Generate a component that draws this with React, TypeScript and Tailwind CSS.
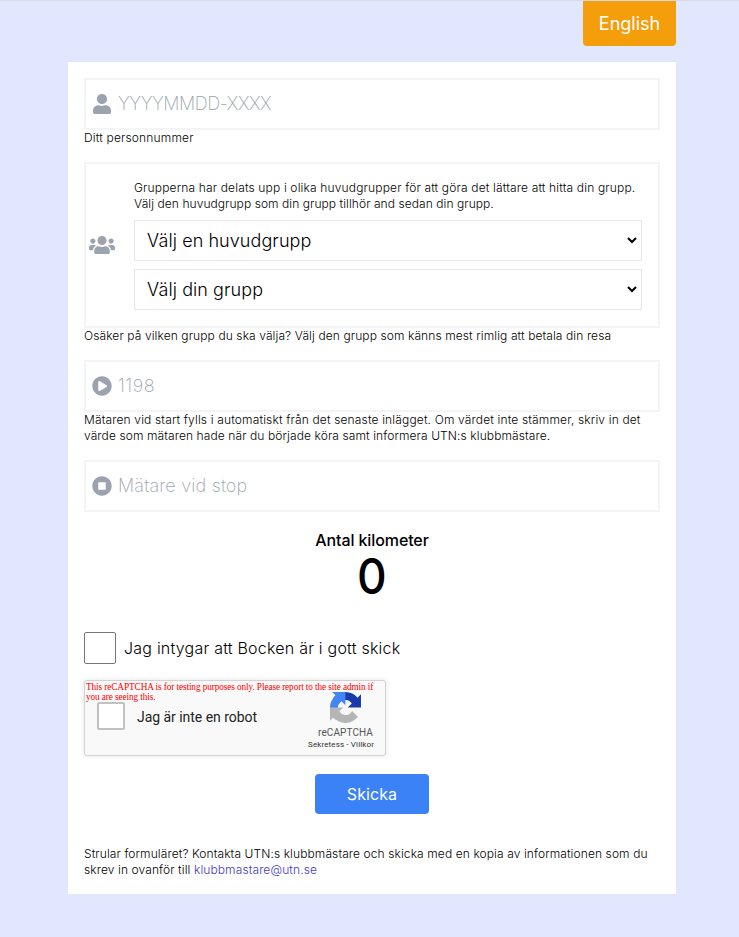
import React from 'react';
import { FaUser, FaUsers, FaPlayCircle, FaStopCircle } from 'react-icons/fa';

type FieldProps = { icon: React.ReactNode; placeholder: string; tracking: string };

function Field({ icon, placeholder, tracking }: FieldProps) {
  return (
    <div className="flex h-[52px] items-center border-2 border-[#f3f4f6] pl-1.5 text-[#9ca3af]">
      <span className="flex w-[26px] justify-start pb-px text-[20px]">{icon}</span>
      <input
        className={`min-w-0 flex-1 text-lg font-extralight text-black outline-none placeholder:text-[#9ca3af] ${tracking}`}
        placeholder={placeholder}
      />
    </div>
  );
}

function Select({ label }: { label: string }) {
  return (
    <div className="flex h-[41px] items-center justify-between border border-[#e5e7eb] pl-3 pr-1 text-lg font-light tracking-[0.07px]">
      <span>{label}</span>
      <svg width="10" height="7" viewBox="0 0 10 7" fill="none" stroke="black" strokeWidth="2">
        <path d="M1 1l4 4 4-4" />
      </svg>
    </div>
  );
}

function RecaptchaLogo() {
  return (
    <svg width="31" height="31" viewBox="0 0 64 64">
      <path fill="#1C3AA9" d="M64 31.955l-.033-1.37V4.687l-7.16 7.16C50.948 4.674 42.033.093 32.05.093c-10.4 0-19.622 4.96-25.458 12.64l11.736 11.86a15.55 15.55 0 0 1 4.754-5.334c2.05-1.6 4.952-2.906 8.968-2.906.485 0 .86.057 1.135.163 4.976.393 9.288 3.14 11.828 7.124l-8.307 8.307L64 31.953" />
      <path fill="#4285F4" d="M31.862.094l-1.37.033H4.594l7.16 7.16C4.58 13.147 0 22.06 0 32.046c0 10.4 4.96 19.622 12.64 25.458L24.5 45.768a15.55 15.55 0 0 1-5.334-4.754c-1.6-2.05-2.906-4.952-2.906-8.968 0-.485.057-.86.163-1.135.393-4.976 3.14-9.288 7.124-11.828l8.307 8.307L31.86.095" />
      <path fill="#B5B5B5" d="M.001 32.045l.033 1.37v25.898l7.16-7.16c5.86 7.173 14.774 11.754 24.76 11.754 10.4 0 19.622-4.96 25.458-12.64l-11.736-11.86a15.55 15.55 0 0 1-4.754 5.334c-2.05 1.6-4.952 2.906-8.968 2.906-.485 0-.86-.057-1.135-.163-4.976-.393-9.288-3.14-11.828-7.124l8.307-8.307c-10.522.04-22.4.066-27.295-.005" />
    </svg>
  );
}

function Captcha() {
  return (
    <div className="relative mt-4 h-[76px] w-[302px] rounded-[3px] border border-[#d3d3d3] bg-[#f9f9f9] font-['Roboto',sans-serif] shadow-[0_0_4px_1px_rgba(0,0,0,0.08)]">
      <p className="absolute left-px top-px whitespace-nowrap font-['Liberation_Serif',serif] text-[9.3px] font-normal leading-[10px] tracking-[-0.115px] text-[#ff0000]">
        This reCAPTCHA is for testing purposes only. Please report to the site admin if<br />you are seeing this.
      </p>
      <div className="flex h-full items-start pl-3">
        <span className="mt-[21px] h-7 w-7 rounded-[2px] border-2 border-[#c1c1c1] bg-white" />
        <span className="ml-3 mt-[26px] flex-1 text-sm font-normal leading-5 tracking-[-0.04px] text-[#222]">Jag är inte en robot</span>
        <div className="mr-[11px] mt-[11px] flex flex-col items-end text-[#555]">
          <span className="mr-[13px]"><RecaptchaLogo /></span>
          <span className="mr-px mt-[3px] text-[10px] font-normal leading-[13px] tracking-[0.1px]">reCAPTCHA</span>
          <span className="whitespace-nowrap text-[8px] font-normal leading-3 tracking-[0.13px] text-[#333]">Sekretess - Villkor</span>
        </div>
      </div>
    </div>
  );
}

export default function App() {
  return (
    <div className="h-[937px] border-t border-[#d9dbe0] bg-[#e0e7ff] font-['Inter',sans-serif] font-light text-black">
      <div className="ml-[68px] w-[608px]">
        <div className="flex justify-end">
          <button className="h-[45px] w-[93px] rounded-b bg-[#f59e0b] text-lg font-normal text-white">English</button>
        </div>
        <main className="mt-4 h-[832px] bg-white p-4 text-xs tracking-[0.1px]">
          <Field
            icon={
              <svg className="ml-px h-5 w-[18px]" viewBox="0 0 448 512" preserveAspectRatio="none" fill="currentColor">
                <path d="M224 256c70.700 0 128-57.300 128-128S294.700 0 224 0 96 57.300 96 128s57.300 128 128 128zm89.600 32h-16.700c-22.200 10.200-46.900 16-72.900 16s-50.600-5.800-72.900-16h-16.700C60.200 288 0 348.200 0 422.400V464c0 26.500 21.500 48 48 48h352c26.500 0 48-21.500 48-48v-41.600c0-74.200-60.200-134.400-134.400-134.400z" />
              </svg>
            }
            placeholder="YYYYMMDD-XXXX"
            tracking="tracking-[-0.42px]"
          />
          <p className="tracking-[0.16px]">Ditt personnummer</p>
          <div className="mt-4 flex h-[166px] items-center border-2 border-[#f3f4f6] pr-4">
            <FaUsers className="mb-px ml-[3px] mr-[19px] h-7 w-[26px] shrink-0 text-[#9ca3af]" />
            <div className="flex-1">
              <p className="mb-2 whitespace-nowrap">
                <span className="tracking-[0.155px]">Grupperna har delats upp i olika huvudgrupper för att göra det lättare att hitta din grupp.</span><br /><span className="tracking-[0.065px]">Välj den huvudgrupp som din grupp tillhör and sedan din grupp.</span>
              </p>
              <Select label="Välj en huvudgrupp" />
              <div className="h-2" />
              <Select label="Välj din grupp" />
            </div>
          </div>
          <p>Osäker på vilken grupp du ska välja? Välj den grupp som känns mest rimlig att betala din resa</p>
          <div className="mt-4"><Field icon={<FaPlayCircle />} placeholder="1198" tracking="tracking-[0.5px]" /></div>
          <p className="whitespace-nowrap"><span className="tracking-[0.15px]">Mätaren vid start fylls i automatiskt från det senaste inlägget. Om värdet inte stämmer, skriv in det</span><br />värde som mätaren hade när du började köra samt informera UTN:s klubbmästare.</p>
          <div className="mt-4"><Field icon={<FaStopCircle />} placeholder="Mätare vid stop" tracking="tracking-[0.2px]" /></div>
          <div className="mt-4 text-center font-medium">
            <p className="text-base tracking-[-0.1px]">Antal kilometer</p>
            <p className="origin-center scale-x-[.92] text-[50px] leading-[48px]">0</p>
          </div>
          <label className="mt-8 flex h-8 items-center gap-2 text-base tracking-[0.22px]">
            <span className="h-8 w-8 rounded-[2px] border border-[#767676]" />
            Jag intygar att Bocken är i gott skick
          </label>
          <Captcha />
          <div className="mt-[18px] flex justify-center">
            <button className="h-10 w-[114px] rounded bg-[#3b82f6] text-base font-normal text-white">Skicka</button>
          </div>
          <p className="mt-8 whitespace-nowrap">
            Strular formuläret? Kontakta UTN:s klubbmästare och skicka med en kopia av informationen som du<br />skrev in ovanför till <a className="text-[#4338ca]">klubbmastare@utn.se</a>
          </p>
        </main>
      </div>
    </div>
  );
}
